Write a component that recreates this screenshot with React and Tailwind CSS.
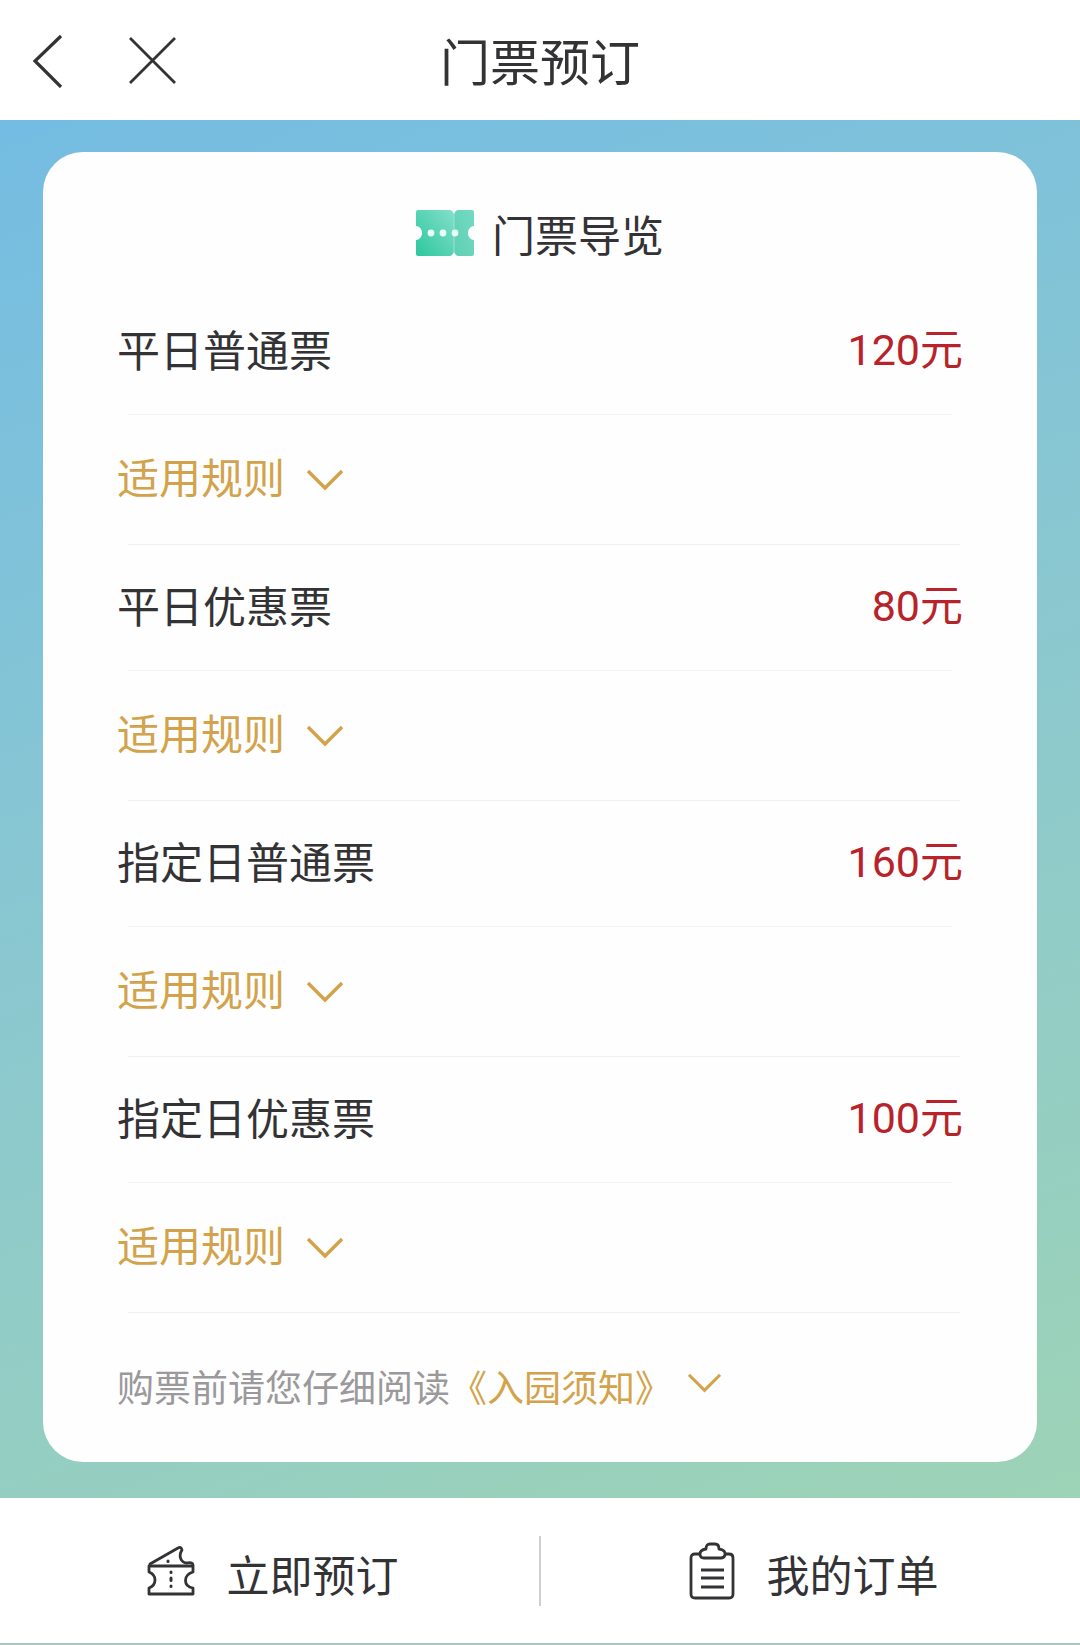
const TICKETS = [
  { id: "weekday", name: "平日普通票", price: 120 },
  { id: "weekday-discount", name: "平日优惠票", price: 80 },
  { id: "special", name: "指定日普通票", price: 160 },
  { id: "special-discount", name: "指定日优惠票", price: 100 },
];

export default function App() {
  return (
    <div className="flex min-h-screen flex-col bg-white font-[Roboto,'Noto_Sans_CJK_SC',sans-serif] text-[#333336]">
      <Header />
      <main className="flex-1 bg-linear-160 from-[#74bce2] via-[#8bc8cf] to-[#9dd3b6] px-[43px] pt-8 pb-9">
        <section className="rounded-[40px] bg-[#fefefe] px-[74px]">
          <h2 className="flex h-[137px] items-center justify-center gap-[18px] pt-6 text-[43px] leading-[60px]">
            <TicketBadge />
            <span className="pt-2">门票导览</span>
          </h2>
          <ul>
            {TICKETS.map((ticket) => (
              <TicketItem key={ticket.id} ticket={ticket} />
            ))}
          </ul>
          <p className="flex h-[149px] items-center pt-1 text-[37px] leading-[60px] text-[#9b999b]">
            购票前请您仔细阅读
            <button
              type="button"
              className="flex cursor-pointer items-center gap-4 text-[#d3a34b]"
            >
              《入园须知》
              <Chevron className="mb-3 w-[33px]" />
            </button>
          </p>
        </section>
      </main>
      <BottomBar />
    </div>
  );
}

function Header() {
  return (
    <header className="grid h-[120px] grid-cols-[1fr_auto_1fr] items-center px-8">
      <div className="flex items-center gap-16">
        <button type="button" aria-label="返回" className="cursor-pointer">
          <svg width="32" height="56" viewBox="0 0 32 56" fill="none">
            <path d="M29 4 3 29l26 26" stroke="#333336" strokeWidth="3.2" />
          </svg>
        </button>
        <button type="button" aria-label="关闭" className="cursor-pointer">
          <svg width="48" height="48" viewBox="0 0 48 48" fill="none">
            <path d="m2 2 45 45M47 2 2 47" stroke="#333336" strokeWidth="2.8" />
          </svg>
        </button>
      </div>
      <h1 className="pt-2 text-[50px] leading-[72px]">门票预订</h1>
    </header>
  );
}

function TicketItem({ ticket }) {
  return (
    <li>
      <div className="flex h-[125px] items-center justify-between text-[43px] leading-[60px]">
        <h3>{ticket.name}</h3>
        <span className="pb-1 text-[#b8232b]">{ticket.price}元</span>
      </div>
      <hr className="mr-[11px] ml-[11px] border-[#f3f3f6]" />
      <div className="flex h-[129px] items-center">
        <button
          type="button"
          className="flex cursor-pointer items-center gap-[22px] text-[42px] leading-[60px] text-[#d3a34b]"
        >
          适用规则
          <Chevron className="w-9" />
        </button>
      </div>
      <hr className="mr-[3px] ml-[11px] border-[#f0f0f0]" />
    </li>
  );
}

function Chevron({ className }) {
  return (
    <svg className={className} viewBox="0 0 36 22" fill="none">
      <path d="m1 2 17 17L35 2" stroke="currentColor" strokeWidth="3.4" />
    </svg>
  );
}

function BottomBar() {
  return (
    <nav className="flex h-[147px] items-center border-b-2 border-[#a9c9c0] text-[43px] leading-[60px]">
      <a
        href="#book"
        className="flex flex-1 items-center justify-center gap-8 pl-1.5"
      >
        <BookIcon />
        <span className="pt-3">立即预订</span>
      </a>
      <span className="h-[70px] w-0.5 bg-[#cfcfcf]" />
      <a
        href="#orders"
        className="flex flex-1 items-center justify-center gap-8 pl-1.5"
      >
        <OrdersIcon />
        <span className="pt-3">我的订单</span>
      </a>
    </nav>
  );
}

function TicketBadge() {
  return (
    <svg width="58" height="46" viewBox="0 0 58 46">
      <defs>
        <linearGradient id="badge" x1="0" y1="1" x2="1" y2="0">
          <stop offset="0" stopColor="#2cc79e" />
          <stop offset="1" stopColor="#84dfca" />
        </linearGradient>
        <linearGradient id="badge-stub" x1="0" y1="1" x2="1" y2="0">
          <stop offset="0" stopColor="#5fcfb2" />
          <stop offset="1" stopColor="#72dbc3" />
        </linearGradient>
      </defs>
      <path
        d="M2 0h32q2 0 4 4v38q-2 4-4 4H2q-2 0-2-2V30c8-1 8-13 0-14V2q0-2 2-2Z"
        fill="url(#badge)"
      />
      <path
        d="M42 0h14q2 0 2 2v14c-8 1-8 13 0 14v14q0 2-2 2H42q-2 0-4-4V4q2-4 4-4Z"
        fill="url(#badge-stub)"
      />
      <path d="M38 4v38" stroke="#9be3d2" />
      <g fill="#e8fffa">
        <circle cx="15" cy="23" r="3.4" />
        <circle cx="27" cy="23" r="3.4" />
        <circle cx="39" cy="23" r="3.4" />
      </g>
    </svg>
  );
}

function BookIcon() {
  return (
    <svg
      width="48"
      height="52"
      viewBox="0 0 48 52"
      fill="none"
      stroke="#333336"
      strokeWidth="2.8"
      strokeLinejoin="round"
      strokeLinecap="round"
    >
      <path d="M2 21h44v6c-10 3-10 14 0 16v6H2v-6c8-3 8-13 0-16Z" />
      <path d="M3 19 31 3q3-2 4 2c-4 6-1 13 5 13 3-1 6 0 6 2" />
      <path d="M24 27v.5M24 33v2.5M24 41v.5M21 16v.5" strokeWidth="3" />
    </svg>
  );
}

function OrdersIcon() {
  return (
    <svg
      width="46"
      height="58"
      viewBox="0 0 46 58"
      fill="none"
      stroke="#333336"
      strokeWidth="2.8"
      strokeLinejoin="round"
    >
      <path d="M10 12H6q-4 0-4 4v36q0 4 4 4h34q4 0 4-4V16q0-4-4-4h-4" />
      <path d="M17 7q0-5 4-5h5q4 0 4 5 7 1 6 6-1 3-4 3H15q-4 0-4-4 0-4 6-5Z" />
      <path d="M12 28h23M12 36h23M12 45h23" />
    </svg>
  );
}
